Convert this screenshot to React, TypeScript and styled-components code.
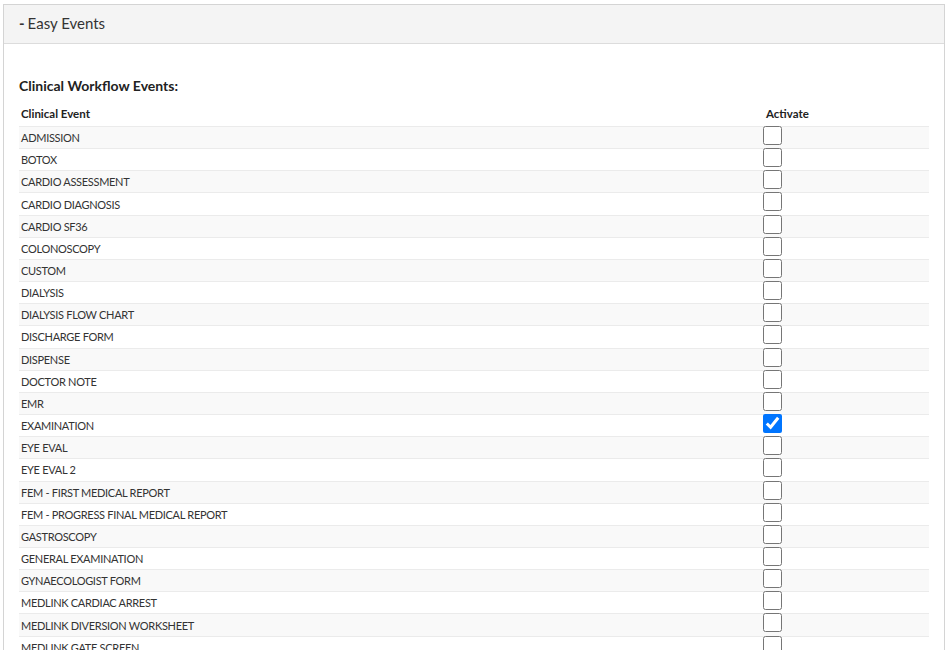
import React from "react";
import styled, { createGlobalStyle } from "styled-components";

const GlobalStyle = createGlobalStyle`
  html, body {
    margin: 0;
    padding: 0;
    background: #fff;
    font-family: Lato, "Liberation Sans", sans-serif;
    color: #333;
  }
`;

const events = [
  "ADMISSION",
  "BOTOX",
  "CARDIO ASSESSMENT",
  "CARDIO DIAGNOSIS",
  "CARDIO SF36",
  "COLONOSCOPY",
  "CUSTOM",
  "DIALYSIS",
  "DIALYSIS FLOW CHART",
  "DISCHARGE FORM",
  "DISPENSE",
  "DOCTOR NOTE",
  "EMR",
  "EXAMINATION",
  "EYE EVAL",
  "EYE EVAL 2",
  "FEM - FIRST MEDICAL REPORT",
  "FEM - PROGRESS FINAL MEDICAL REPORT",
  "GASTROSCOPY",
  "GENERAL EXAMINATION",
  "GYNAECOLOGIST FORM",
  "MEDLINK CARDIAC ARREST",
  "MEDLINK DIVERSION WORKSHEET",
  "MEDLINK GATE SCREEN",
];

const Page = styled.div`
  padding: 4px 3px 0 3px;
  height: 650px;
  box-sizing: border-box;
`;

const Panel = styled.section`
  border: 1px solid #d4d4d4;
  width: 942px;
  height: 650px;
  box-sizing: border-box;
  overflow: hidden;
  background: #fff;
`;

const PanelHeader = styled.header`
  height: 39px;
  box-sizing: border-box;
  background: #f4f4f4;
  border-bottom: 1px solid #dcdcdc;
  display: flex;
  align-items: center;
  padding: 0 15px 2px 15px;
  font-size: 15px;
  color: #333;
`;

const Dash = styled.b`
  margin-right: 3px;
`;

const PanelBody = styled.div`
  padding: 33px 15px 0 15px;
`;

const SectionTitle = styled.h4`
  margin: 0 0 9px 0;
  font-size: 14px;
  font-weight: 700;
  color: #222;
`;

const HeadRow = styled.div`
  display: grid;
  grid-template-columns: 1fr 169px;
  height: 23px;
  align-items: center;
  padding-bottom: 2px;
  box-sizing: border-box;
  font-size: 11.5px;
  font-weight: 700;
  color: #222;
`;

const HeadCell = styled.div<{ $pad: number }>`
  padding-left: ${(p) => p.$pad}px;
`;

const Row = styled.div<{ $striped: boolean }>`
  display: grid;
  grid-template-columns: 1fr 169px;
  height: 22.17px;
  box-sizing: border-box;
  border-top: 1px solid #ebebeb;
  background: ${(p) => (p.$striped ? "#f9f9f9" : "#fff")};
  font-size: 11px;
  letter-spacing: -0.3px;
  color: #333;
`;

const NameCell = styled.div`
  padding-left: 2px;
  display: flex;
  align-items: center;
`;

const CheckCell = styled.div`
  padding-left: 3px;
`;

const Check = styled.input`
  width: 19px;
  height: 19px;
  margin: -1px 0 0 0;
  display: block;
  accent-color: #0075ff;
`;

export default function App() {
  return (
    <>
      <GlobalStyle />
      <Page>
        <Panel>
          <PanelHeader>
            <Dash>-</Dash>Easy Events
          </PanelHeader>
          <PanelBody>
            <SectionTitle>Clinical Workflow Events:</SectionTitle>
            <HeadRow>
              <HeadCell $pad={2}>Clinical Event</HeadCell>
              <HeadCell $pad={6}>Activate</HeadCell>
            </HeadRow>
            {events.map((name, i) => (
              <Row key={name} $striped={i % 2 === 0}>
                <NameCell>{name}</NameCell>
                <CheckCell>
                  <Check type="checkbox" defaultChecked={name === "EXAMINATION"} />
                </CheckCell>
              </Row>
            ))}
          </PanelBody>
        </Panel>
      </Page>
    </>
  );
}
